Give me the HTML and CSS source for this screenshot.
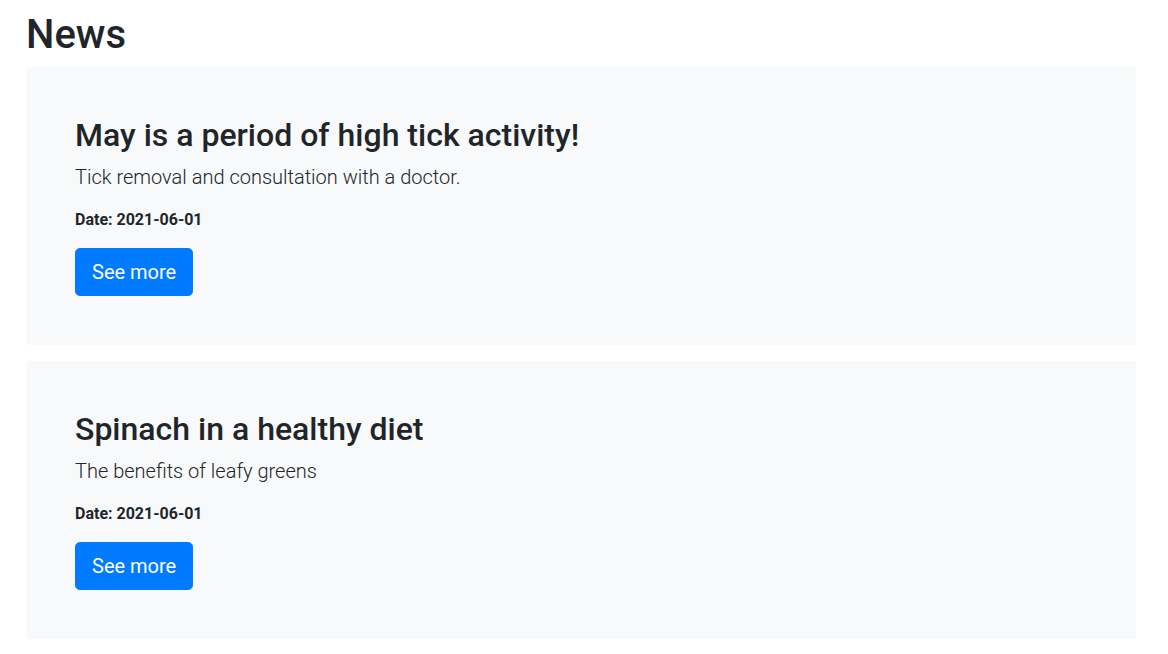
FILE: index.html
```html
<!DOCTYPE html>
<html lang="en">
<head>
<meta charset="utf-8">
<title>News</title>
<link rel="stylesheet" href="styles.css">
</head>
<body>
<main class="page">
  <h1 class="page-title">News</h1>
  <article class="news-card">
    <h2 class="news-title">May is a period of high tick activity!</h2>
    <p class="news-lead">Tick removal and consultation with a doctor.</p>
    <p class="news-date">Date: 2021-06-01</p>
    <a class="btn" href="#">See more</a>
  </article>
  <article class="news-card">
    <h2 class="news-title">Spinach in a healthy diet</h2>
    <p class="news-lead">The benefits of leafy greens</p>
    <p class="news-date">Date: 2021-06-01</p>
    <a class="btn" href="#">See more</a>
  </article>
</main>
</body>
</html>
```
FILE: styles.css
```css
* { box-sizing: border-box; }
html, body { margin: 0; padding: 0; background: #fff; }
body {
  font-family: Roboto, "Liberation Sans", sans-serif;
  color: #212529;
  font-size: 16px;
  line-height: 1.5;
}
.page {
  padding: 11px 32px 0 26px;
  display: flex;
  flex-direction: column;
}
.page-title {
  margin: 0 0 8px;
  font-size: 40px;
  font-weight: 500;
  line-height: 1.2;
}
.news-card {
  background: #f8f9fa;
  border-radius: 4px;
  padding: 49px 49px 48.6px;
  margin-bottom: 16px;
  display: flex;
  flex-direction: column;
  align-items: flex-start;
}
.news-title {
  margin: 0 0 8px;
  font-size: 32px;
  font-weight: 500;
  line-height: 1.2;
}
.news-lead {
  margin: 0 0 16px;
  font-size: 20px;
  font-weight: 300;
  line-height: 1.5;
}
.news-date {
  margin: 0 0 16px;
  font-size: 16px;
  font-weight: 700;
}
.btn {
  display: inline-block;
  background: #007bff;
  color: #fff;
  text-decoration: none;
  border: 1px solid #007bff;
  border-radius: 4.8px;
  padding: 8px 16px;
  font-size: 20px;
  line-height: 1.5;
}
```
